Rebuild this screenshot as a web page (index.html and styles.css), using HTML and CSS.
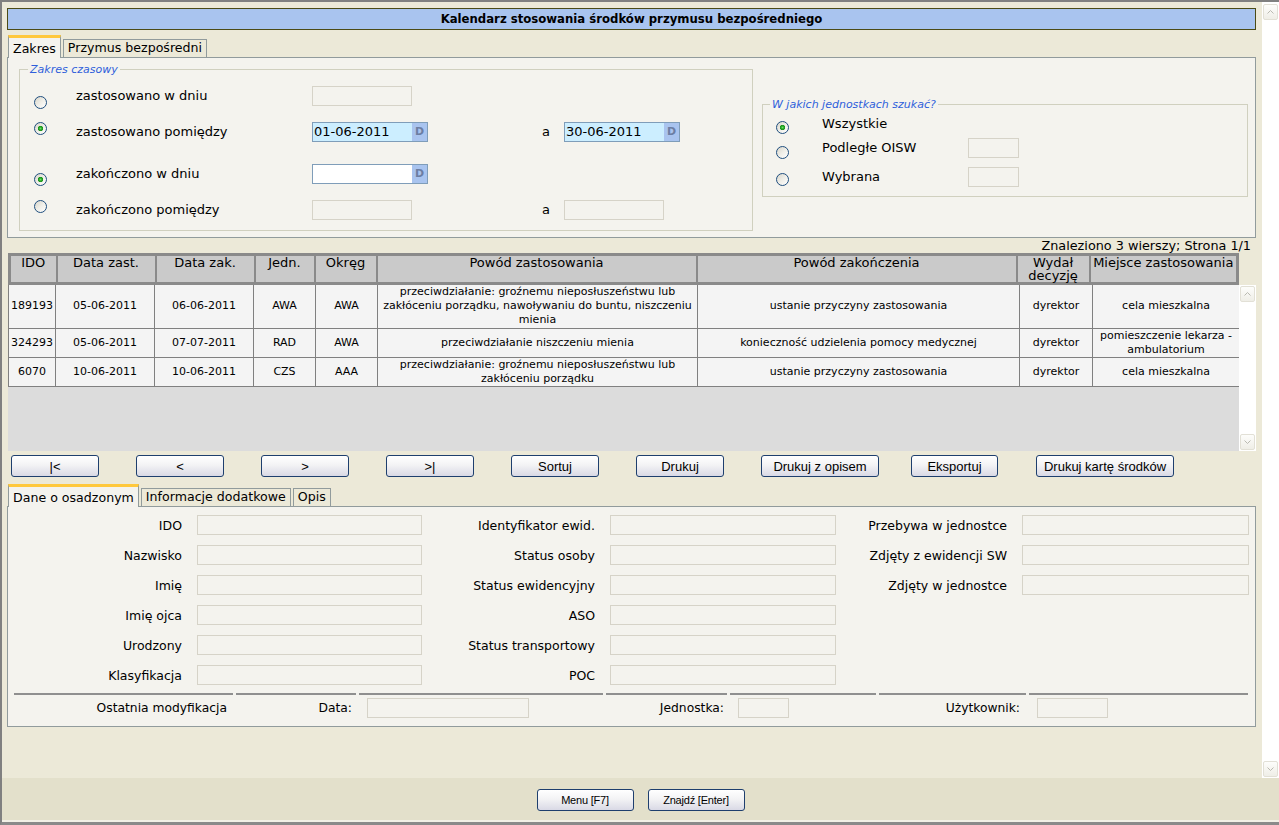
FILE: index.html
```html
<!DOCTYPE html>
<html lang="pl">
<head>
<meta charset="utf-8">
<title>Kalendarz stosowania środków przymusu bezpośredniego</title>
<link rel="stylesheet" href="styles.css">
</head>
<body>
<div class="window">
  <div class="main">
    <div class="content">
      <div class="title">Kalendarz stosowania środków przymusu bezpośredniego</div>

      <div class="tabs">
        <div class="tab active">Zakres</div>
        <div class="tab">Przymus bezpośredni</div>
      </div>
      <div class="panel range-panel">
        <fieldset class="fs fs-time">
          <legend>Zakres czasowy</legend>
          <div class="time-grid">
            <span class="radio r-dn12"></span>
            <span class="lbl">zastosowano w dniu</span>
            <span class="inp w100"></span>
            <span></span><span></span>

            <span class="radio on r-up7"></span>
            <span class="lbl">zastosowano pomiędzy</span>
            <span class="date"><span class="val">01-06-2011</span><span class="d">D</span></span>
            <span class="lbl">a</span>
            <span class="date"><span class="val">30-06-2011</span><span class="d">D</span></span>

            <span class="radio on r-dn11"></span>
            <span class="lbl">zakończono w dniu</span>
            <span class="date white"><span class="val"></span><span class="d">D</span></span>
            <span></span><span></span>

            <span class="radio r-up7"></span>
            <span class="lbl">zakończono pomiędzy</span>
            <span class="inp w100"></span>
            <span class="lbl">a</span>
            <span class="inp w100"></span>
          </div>
        </fieldset>
        <fieldset class="fs fs-units">
          <legend>W jakich jednostkach szukać?</legend>
          <div class="units-grid">
            <span class="radio on r-dn7"></span>
            <span class="lbl">Wszystkie</span>
            <span></span>

            <span class="radio r-dn9"></span>
            <span class="lbl">Podległe OISW</span>
            <span class="inp w50"></span>

            <span class="radio r-dn4"></span>
            <span class="lbl">Wybrana</span>
            <span class="inp w50"></span>
          </div>
        </fieldset>
      </div>

      <div class="found">Znaleziono 3 wierszy; Strona 1/1</div>

      <table class="ghead">
        <colgroup>
          <col style="width:47px"><col style="width:99px"><col style="width:99px"><col style="width:60px"><col style="width:62px"><col style="width:320px"><col style="width:320px"><col style="width:73px"><col style="width:148px">
        </colgroup>
        <tr>
          <th>IDO</th><th>Data zast.</th><th>Data zak.</th><th>Jedn.</th><th>Okręg</th><th>Powód zastosowania</th><th>Powód zakończenia</th><th>Wydał<br>decyzję</th><th>Miejsce zastosowania</th>
        </tr>
      </table>
      <div class="gwrap">
        <div class="garea">
          <table class="gbody">
            <colgroup>
              <col style="width:47px"><col style="width:99px"><col style="width:99px"><col style="width:62px"><col style="width:62px"><col style="width:320px"><col style="width:322px"><col style="width:73px"><col style="width:147px">
            </colgroup>
            <tr class="r3">
              <td>189193</td><td>05-06-2011</td><td>06-06-2011</td><td>AWA</td><td>AWA</td>
              <td>przeciwdziałanie: groźnemu nieposłuszeństwu lub<br>zakłóceniu porządku, nawoływaniu do buntu, niszczeniu<br>mienia</td>
              <td>ustanie przyczyny zastosowania</td><td>dyrektor</td><td>cela mieszkalna</td>
            </tr>
            <tr class="r2">
              <td>324293</td><td>05-06-2011</td><td>07-07-2011</td><td>RAD</td><td>AWA</td>
              <td>przeciwdziałanie niszczeniu mienia</td>
              <td>konieczność udzielenia pomocy medycznej</td><td>dyrektor</td><td>pomieszczenie lekarza -<br>ambulatorium</td>
            </tr>
            <tr class="r2b">
              <td>6070</td><td>10-06-2011</td><td>10-06-2011</td><td>CZS</td><td>AAA</td>
              <td>przeciwdziałanie: groźnemu nieposłuszeństwu lub<br>zakłóceniu porządku</td>
              <td>ustanie przyczyny zastosowania</td><td>dyrektor</td><td>cela mieszkalna</td>
            </tr>
          </table>
        </div>
        <div class="sbar tsbar">
          <span class="sbtn"><svg width="7" height="4" viewBox="0 0 7 4"><path d="M0.5 3.5 L3.5 0.5 L6.5 3.5" fill="none" stroke="#B9B9B0" stroke-width="1"/></svg></span>
          <span class="sbtn"><svg width="7" height="4" viewBox="0 0 7 4"><path d="M0.5 0.5 L3.5 3.5 L6.5 0.5" fill="none" stroke="#B9B9B0" stroke-width="1"/></svg></span>
        </div>
      </div>

      <div class="navrow">
        <span class="btn w88">|&lt;</span>
        <span class="btn w88">&lt;</span>
        <span class="btn w88">&gt;</span>
        <span class="btn w88">&gt;|</span>
        <span class="btn w88">Sortuj</span>
        <span class="btn w88">Drukuj</span>
        <span class="btn w118">Drukuj z opisem</span>
        <span class="btn w87 b-exp">Eksportuj</span>
        <span class="btn w138 b-last">Drukuj kartę środków</span>
      </div>

      <div class="tabs tabs-bottom">
        <div class="tab active">Dane o osadzonym</div>
        <div class="tab">Informacje dodatkowe</div>
        <div class="tab">Opis</div>
      </div>
      <div class="panel detail-panel">
        <div class="fgrid">
          <span class="flbl">IDO</span><span class="inp"></span>
          <span class="flbl">Identyfikator ewid.</span><span class="inp"></span>
          <span class="flbl">Przebywa w jednostce</span><span class="inp"></span>

          <span class="flbl">Nazwisko</span><span class="inp"></span>
          <span class="flbl">Status osoby</span><span class="inp"></span>
          <span class="flbl">Zdjęty z ewidencji SW</span><span class="inp"></span>

          <span class="flbl">Imię</span><span class="inp"></span>
          <span class="flbl">Status ewidencyjny</span><span class="inp"></span>
          <span class="flbl">Zdjęty w jednostce</span><span class="inp"></span>

          <span class="flbl">Imię ojca</span><span class="inp"></span>
          <span class="flbl">ASO</span><span class="inp"></span>
          <span></span><span></span>

          <span class="flbl">Urodzony</span><span class="inp"></span>
          <span class="flbl">Status transportowy</span><span class="inp"></span>
          <span></span><span></span>

          <span class="flbl">Klasyfikacja</span><span class="inp"></span>
          <span class="flbl">POC</span><span class="inp"></span>
          <span></span><span></span>
        </div>
        <div class="modrow">
          <span class="mc mlbl p6">Ostatnia modyfikacja</span>
          <span class="mc mlbl p4">Data:</span>
          <span class="mc"><span class="inp w162"></span></span>
          <span class="mc mlbl p3">Jednostka:</span>
          <span class="mc"><span class="inp w51"></span></span>
          <span class="mc mlbl p6">Użytkownik:</span>
          <span class="mc"><span class="inp w71"></span></span>
        </div>
      </div>
    </div>
    <div class="sbar vbar">
      <span class="sbtn"><svg width="7" height="4" viewBox="0 0 7 4"><path d="M0.5 3.5 L3.5 0.5 L6.5 3.5" fill="none" stroke="#B9B9B0" stroke-width="1"/></svg></span>
      <span class="sbtn"><svg width="7" height="4" viewBox="0 0 7 4"><path d="M0.5 0.5 L3.5 3.5 L6.5 0.5" fill="none" stroke="#B9B9B0" stroke-width="1"/></svg></span>
    </div>
  </div>
  <div class="footer">
    <span class="btn fbtn">Menu [F7]</span>
    <span class="btn fbtn">Znajdź [Enter]</span>
  </div>
</div>
</body>
</html>
```

FILE: styles.css
```css
* { box-sizing: border-box; }
html, body { margin: 0; padding: 0; }
body {
  width: 1279px;
  height: 825px;
  overflow: hidden;
  background: #ECE9D8;
  font-family: "DejaVu Sans", Verdana, sans-serif;
  font-size: 13px;
  color: #000;
}

.window {
  width: 1279px;
  height: 825px;
  display: flex;
  flex-direction: column;
  border-top: 2px solid #808080;
  border-left: 2px solid #808080;
  border-bottom: 3px solid #8A8A8A;
}

.main { display: flex; height: 776px; }

.content {
  width: 1260px;
  padding: 6px 6px 0 5px;
}

/* scrollbars */
.sbar {
  background: #FFFFFF;
  display: flex;
  flex-direction: column;
  justify-content: space-between;
  align-items: center;
}
.vbar { width: 17px; padding: 2px 0 1px; }
.tsbar { width: 17px; padding: 1px 0 1px; }
.sbtn {
  width: 15px;
  height: 16px;
  border: 1px solid #E2E0D6;
  border-radius: 2px;
  background: linear-gradient(#FDFDFB, #EFEEE7);
  display: flex;
  align-items: center;
  justify-content: center;
}

/* title */
.title {
  height: 22px;
  border: 1px solid #4B4B16;
  background: #A9C4EF;
  font-weight: bold;
  font-size: 11.7px;
  line-height: 20px;
  text-align: center;
}

/* tabs */
.tabs {
  display: flex;
  align-items: flex-end;
  gap: 2px;
  padding-left: 1px;
  margin-top: 5px;
}
.tab {
  height: 18px;
  border: 1px solid #919B9C;
  border-bottom: none;
  background: #ECE9D8;
  padding: 0 4px 1px 4px;
  line-height: 16px;
  font-size: 12.6px;
  white-space: nowrap;
}
.tab.active {
  height: 23px;
  background: #F4F3EE;
  border-top: 3px solid #FFC83C;
  padding-top: 3px;
  margin-bottom: -1px;
  position: relative;
  z-index: 1;
}
.tabs-bottom { margin-top: 7px; }

.panel {
  background: #F4F3EE;
  border: 1px solid #919B9C;
}

/* range panel */
.range-panel {
  display: flex;
  align-items: flex-start;
  gap: 9px;
  padding: 0 7px 6px 11px;
}
.fs {
  margin: 0;
  padding: 0;
  border: 1px solid #D0D0BF;
  min-width: 0;
}
.fs legend {
  margin-left: 8px;
  padding: 0 2px;
  font-size: 11px;
  font-style: italic;
  color: #2F5FDB;
  line-height: 13px;
}
.fs-time { width: 734px; margin-top: 5px; padding: 6px 0 5px 0; }
.fs-units { width: 486px; margin-top: 40px; padding: 0 0 2px 0; }
.fs-units legend { margin-left: 7px; }

.time-grid {
  display: grid;
  grid-template-columns: 56px 236px 230px 22px 1fr;
  grid-template-rows: 28px 43px 41px 31px;
  align-items: center;
}
.units-grid {
  display: grid;
  grid-template-columns: 59px 146px 1fr;
  grid-template-rows: 25px 24px 34px;
  align-items: center;
}
.lbl { font-size: 13px; line-height: 16px; white-space: nowrap; }

.radio {
  display: block;
  width: 13px;
  height: 13px;
  border-radius: 50%;
  border: 1px solid #1F4E7E;
  background: linear-gradient(135deg, #D8D5CA 0%, #EFEEE8 50%, #FFFFFF 100%);
  margin-left: 14px;
}
.units-grid .radio { margin-left: 13px; }
.radio.on {
  background:
    radial-gradient(circle at 50% 50%, #6EDB6E 0, #2BB02B 1.3px, #1B8E1B 2.4px, rgba(27,142,27,0) 3px),
    linear-gradient(135deg, #D8D5CA 0%, #EFEEE8 50%, #FFFFFF 100%);
}
.r-dn12 { margin-top: 12px; }
.r-dn11 { margin-top: 11px; }
.r-dn9 { margin-top: 9px; }
.r-dn7 { margin-top: 7px; }
.r-dn4 { margin-top: 4px; }
.r-up7 { margin-bottom: 7px; }

.inp {
  display: block;
  height: 20px;
  border: 1px solid #D6D3C8;
  background: #F4F3EE;
}
.w100 { width: 100px; }
.w50 { width: 51px; }
.w162 { width: 162px; }
.w51 { width: 51px; }
.w71 { width: 71px; }

.date {
  display: flex;
  width: 116px;
  height: 20px;
  border: 1px solid #7F9DB9;
  background: #CCEEFF;
}
.date.white { background: #FFFFFF; }
.date .val {
  flex: 1;
  padding-left: 1px;
  font-size: 13px;
  line-height: 18px;
}
.date .d {
  width: 15px;
  background: #A9C4EF;
  color: #6C7EA3;
  font-weight: bold;
  font-size: 11px;
  text-align: center;
  line-height: 18px;
}

/* results */
.found {
  height: 15px;
  text-align: right;
  font-size: 12.8px;
  line-height: 15px;
  padding-right: 5px;
}

.ghead {
  margin-left: 1px;
  width: 1228px;
  table-layout: fixed;
  border-collapse: collapse;
  background: #CACACA;
  border: 3px solid #8A8A8A;
}
.ghead th {
  border: 2px solid #8A8A8A;
  font-weight: normal;
  font-size: 13px;
  line-height: 13px;
  vertical-align: top;
  text-align: center;
  padding: 0 1px;
  height: 27px;
  white-space: nowrap;
}

.gwrap {
  display: flex;
  margin-left: 1px;
  height: 166px;
}
.garea {
  width: 1231px;
  background: #DCDCDC;
}
.gbody {
  width: 1231px;
  table-layout: fixed;
  border-collapse: collapse;
  background: #F4F4F4;
}
.gbody td {
  border: 1px solid #808080;
  border-top: none;
  font-size: 11px;
  line-height: 14px;
  text-align: center;
  vertical-align: middle;
  padding: 0 1px;
  white-space: nowrap;
  overflow: hidden;
}
.gbody tr.r3 td { height: 43px; }
.gbody tr.r2 td { height: 29px; }
.gbody tr.r2b td { height: 28px; }

/* buttons */
.navrow {
  display: flex;
  gap: 37px;
  padding-left: 4px;
  margin-top: 4px;
}
.btn {
  display: flex;
  align-items: center;
  justify-content: center;
  height: 22px;
  border: 1px solid #1E3F6E;
  border-radius: 3px;
  background: linear-gradient(#FFFFFF 0%, #F3F3F5 45%, #D9D9E5 100%);
  font-family: "Liberation Sans", Arial, sans-serif;
  font-size: 13px;
  color: #000;
  white-space: nowrap;
}
.w88 { width: 88px; }
.w87 { width: 87px; }
.w118 { width: 118px; }
.w138 { width: 138px; }
.b-exp { margin-left: -5px; }
.b-last { margin-left: 1px; }

/* details */
.detail-panel { padding: 8px 6px 8px 0; }
.fgrid {
  display: grid;
  grid-template-columns: 189px 225px 188px 226px 186px 227px;
  grid-auto-rows: 20px;
  row-gap: 10px;
  align-items: center;
}
.flbl {
  text-align: right;
  padding-right: 15px;
  font-size: 12.5px;
  line-height: 15px;
  white-space: nowrap;
}
.modrow {
  display: grid;
  grid-template-columns: 219px 120px 244px 121px 146px 147px 219px;
  column-gap: 3px;
  margin: 8px 0 0 6px;
}
.mc {
  display: flex;
  align-items: center;
  border-top: 2px solid #8F8F8F;
  padding: 3px 0 0 8px;
  height: 25px;
}
.mlbl {
  justify-content: flex-end;
  padding-left: 0;
  font-size: 12.3px;
  white-space: nowrap;
}
.p6 { padding-right: 6px; }
.p4 { padding-right: 4px; }
.p3 { padding-right: 3px; }

/* footer */
.footer {
  height: 44px;
  background: #E3E0CB;
  border-bottom: 2px solid #F2F0E6;
  display: flex;
  justify-content: center;
  gap: 14px;
  padding-top: 11px;
}
.fbtn {
  width: 97px;
  font-size: 11px;
  letter-spacing: -0.2px;
}
```
